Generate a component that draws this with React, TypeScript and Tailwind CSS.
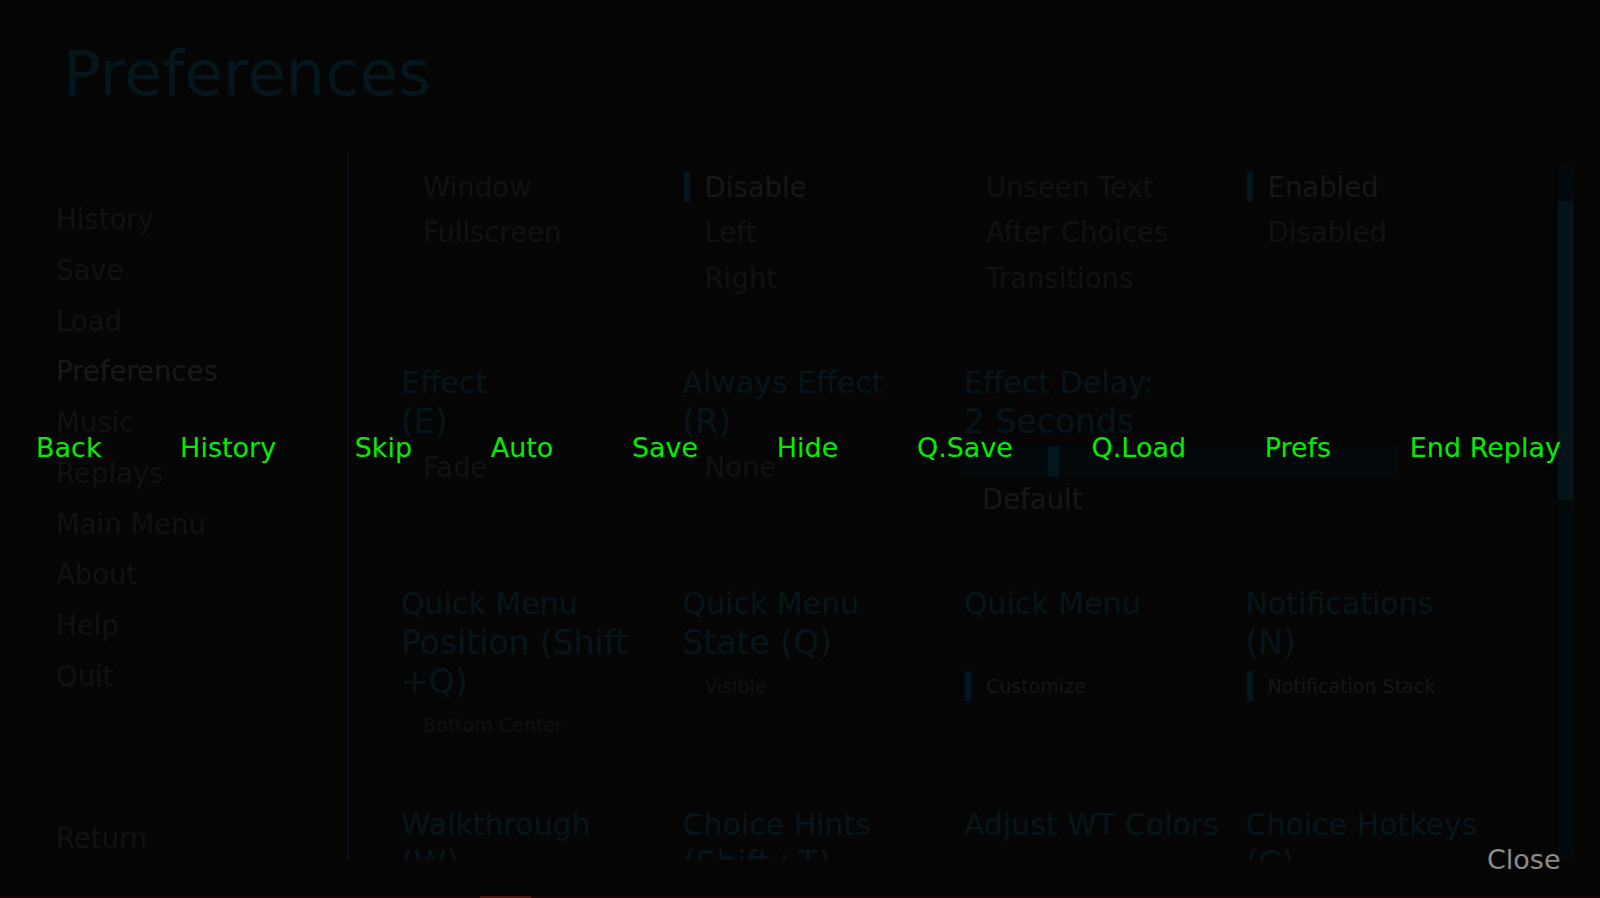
import type { ReactNode } from 'react';

// Ren'Py style preferences screen, dimmed behind a quick-menu overlay.

const NAV_ITEMS = ['History', 'Save', 'Load', 'Preferences', 'Music', 'Replays', 'Main Menu', 'About', 'Help', 'Quit'];

const QUICK_MENU = ['Back', 'History', 'Skip', 'Auto', 'Save', 'Hide', 'Q.Save', 'Q.Load', 'Prefs', 'End Replay'];

function Option({ text, selected = false, small = false }: { text: string; selected?: boolean; small?: boolean }) {
  return (
    <div className={small ? 'flex h-[38px] items-center' : 'flex h-[45.5px] items-center'}>
      <span className={selected ? 'ml-[1px] h-[30px] w-[6px] bg-[#04161f]' : 'ml-[1px] h-[30px] w-[6px]'} />
      <span
        className={
          (small ? 'ml-[15px] text-[19px] ' : 'ml-[15px] text-[27.5px] ') +
          (selected ? 'text-[#181818]' : 'text-[#121212]')
        }
      >
        {text}
      </span>
    </div>
  );
}

// First line of a label is 30px, the wrapped lines below it come out a little larger.
function Label({ lines }: { lines: string[] }) {
  return (
    <div className="whitespace-nowrap text-[#06161c]">
      {lines.map((line, i) => (
        <div key={i} className={i === 0 ? 'text-[30px] leading-[37.5px]' : 'text-[33px] leading-[39px]'}>
          {line}
        </div>
      ))}
    </div>
  );
}

function NavItem({ children, active = false }: { children: ReactNode; active?: boolean }) {
  return (
    <div
      className={
        active
          ? 'flex h-[50.7px] shrink-0 items-center text-[27.5px] text-[#1a1a1a]'
          : 'flex h-[50.7px] shrink-0 items-center text-[27.5px] text-[#121212]'
      }
    >
      {children}
    </div>
  );
}

export default function App() {
  return (
    <div className="relative flex h-[898px] w-[1600px] flex-col overflow-hidden bg-[#050505] font-['DejaVu_Sans',sans-serif]">
      <h1 className="ml-[63px] mt-[43px] text-[62.5px] leading-none text-[#05171e]">Preferences</h1>

      <div className="mt-[45.5px] flex h-[709px]">
        {/* navigation */}
        <nav className="flex w-[347px] shrink-0 flex-col pl-[56px] pt-[43.7px]">
          {NAV_ITEMS.map((item) => (
            <NavItem key={item} active={item === 'Preferences'}>
              {item}
            </NavItem>
          ))}
          <div className="mt-[112px]">
            <NavItem>Return</NavItem>
          </div>
        </nav>

        <div className="h-full w-[2px] bg-[#051219]" />

        {/* scrolled viewport */}
        <div className="flex-1 overflow-hidden">
          <div className="ml-[52px] pt-[13.5px]">
            {/* row 1 (labels scrolled out of view) */}
            <div className="grid h-[199.5px] grid-cols-[repeat(4,281.5px)]">
              <div>
                <Option text="Window" />
                <Option text="Fullscreen" />
              </div>
              <div>
                <Option text="Disable" selected />
                <Option text="Left" />
                <Option text="Right" />
              </div>
              <div>
                <Option text="Unseen Text" />
                <Option text="After Choices" />
                <Option text="Transitions" />
              </div>
              <div>
                <Option text="Enabled" selected />
                <Option text="Disabled" />
              </div>
            </div>

            {/* row 2 */}
            <div className="grid h-[221px] grid-cols-[repeat(4,281.5px)]">
              <div>
                <Label lines={['Effect', '(E)']} />
                <div className="mt-[4px]">
                  <Option text="Fade" />
                </div>
              </div>
              <div>
                <Label lines={['Always Effect', '(R)']} />
                <div className="mt-[4px]">
                  <Option text="None" />
                </div>
              </div>
              <div className="col-span-2">
                <Label lines={['Effect Delay:', '2 Seconds']} />
                <div className="mt-[5.5px] flex h-[31px] w-[434px] bg-[#03080b] pl-[84px]">
                  <div className="h-full w-[11px] bg-[#04151c]" />
                </div>
                <div className="flex h-[45.5px] items-center pl-[18px] text-[27.5px] text-[#181818]">Default</div>
              </div>
            </div>

            {/* row 3 */}
            <div className="grid h-[221px] grid-cols-[repeat(4,281.5px)]">
              <div>
                <Label lines={['Quick Menu', 'Position (Shift', '+Q)']} />
                <div className="mt-[6px]">
                  <Option text="Bottom Center" small />
                </div>
              </div>
              <div>
                <Label lines={['Quick Menu', 'State (Q)']} />
                <div className="mt-[5.5px]">
                  <Option text="Visible" small />
                </div>
              </div>
              <div>
                <Label lines={['Quick Menu', '\u00a0']} />
                <div className="mt-[5.5px]">
                  <Option text="Customize" selected small />
                </div>
              </div>
              <div>
                <Label lines={['Notifications', '(N)']} />
                <div className="mt-[5.5px]">
                  <Option text="Notification Stack" selected small />
                </div>
              </div>
            </div>

            {/* row 4, cut by the viewport */}
            <div className="grid grid-cols-[repeat(4,281.5px)]">
              <Label lines={['Walkthrough', '(W)']} />
              <Label lines={['Choice Hints', '(Shift+T)']} />
              <Label lines={['Adjust WT Colors']} />
              <Label lines={['Choice Hotkeys', '(C)']} />
            </div>
          </div>
        </div>

        {/* scrollbar */}
        <div className="mr-[26px] mt-[12px] h-[697px] w-[16px] bg-[#02090c] pt-[38px]">
          <div className="h-[299px] w-full bg-[#04141b]" />
        </div>
      </div>

      <div className="mt-auto flex h-[2px] w-full bg-[#1a0606]">
        <div className="ml-[480px] h-full w-[51px] bg-[#4a1410]" />
      </div>

      {/* quick menu overlay */}
      <div className="absolute left-[36px] right-[39px] top-[434px] flex justify-between text-[27px] leading-none text-[#00f000]">
        {QUICK_MENU.map((item) => (
          <span key={item}>{item}</span>
        ))}
      </div>

      <div className="absolute left-[1487px] top-[846px] text-[27px] leading-none text-[#8c8c8c]">Close</div>
    </div>
  );
}
